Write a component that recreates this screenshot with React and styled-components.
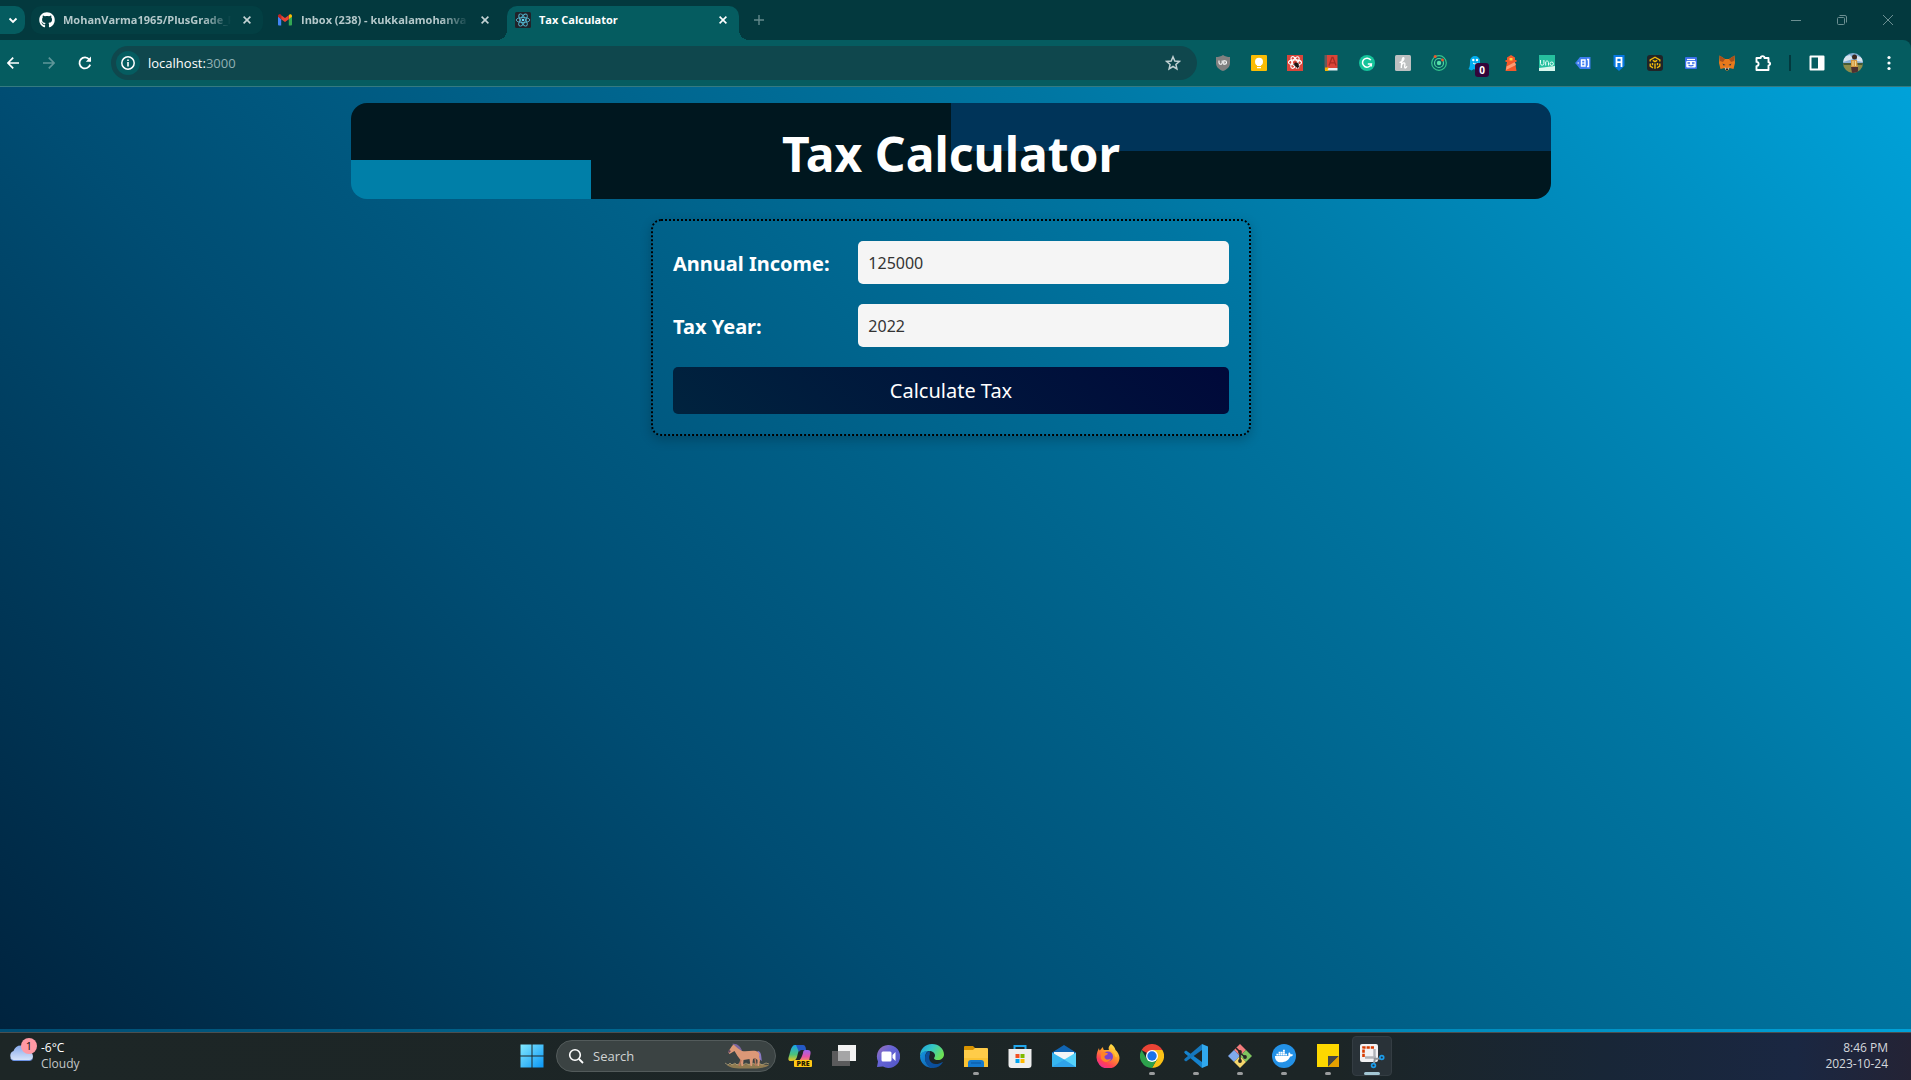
import React, { useState } from "react";
import styled, { createGlobalStyle, css } from "styled-components";
import { FaGithub, FaDocker } from "react-icons/fa";

const UI_FONT = '"Open Sans", "Noto Sans", sans-serif';
const PAGE_FONT = '"Noto Sans", "Open Sans", sans-serif';

const GlobalStyle = createGlobalStyle`
  * { box-sizing: border-box; }
  body { margin: 0; font-family: ${UI_FONT}; }
  button, input { font-family: inherit; }
  svg { display: block; flex: none; }
`;

const Screen = styled.div`
  display: flex;
  flex-direction: column;
  min-height: 100vh;
`;

/* ---------- Browser tabs ---------- */

const TabStrip = styled.div`
  display: flex;
  align-items: flex-start;
  height: 40px;
  padding-top: 6px;
  background: #03393e;
`;

const PlainButton = styled.button`
  display: flex;
  align-items: center;
  justify-content: center;
  flex: none;
  width: ${(p) => p.$w || 36}px;
  height: ${(p) => p.$h || 28}px;
  padding: 0;
  border: 0;
  background: ${(p) => p.$bg || "transparent"};
  border-radius: ${(p) => p.$radius || 0};
  color: ${(p) => p.$color || "#ffffff"};
`;

const Tab = styled.div`
  position: relative;
  display: flex;
  align-items: center;
  flex: none;
  gap: 8px;
  width: 232px;
  height: 28px;
  margin-left: 6px;
  padding: 0 8px;
  border-radius: 10px;
  background: ${(p) => (p.$tinted ? "#033f43" : "transparent")};
  color: #b4c8ca;
  font-size: 11px;
  font-weight: 700;
  line-height: 16px;

  ${(p) =>
    p.$active &&
    css`
      height: 34px;
      padding-bottom: 6px;
      border-radius: 10px 10px 0 0;
      background: #055c60;
      color: #ffffff;

      &::before,
      &::after {
        content: "";
        position: absolute;
        bottom: 0;
        width: 10px;
        height: 10px;
      }
      &::before {
        right: 100%;
        background: radial-gradient(circle at 0 0, transparent 10px, #055c60 10px);
      }
      &::after {
        left: 100%;
        background: radial-gradient(circle at 100% 0, transparent 10px, #055c60 10px);
      }
    `}
`;

const TabTitle = styled.span`
  flex: 1;
  min-width: 0;
  white-space: nowrap;
  ${(p) =>
    p.$fade &&
    css`
      mask-image: linear-gradient(to right, #000 calc(100% - 28px), transparent);
    `}
`;

const WindowControls = styled.div`
  display: flex;
  margin-left: auto;
`;

/* ---------- Browser toolbar ---------- */

const ToolbarBack = styled.div`
  background: #03393e;
`;

const Toolbar = styled.div`
  display: flex;
  align-items: center;
  height: 47px;
  padding: 0 4px 1px 0;
  border-bottom: 1px solid #347a80;
  border-top-right-radius: 8px;
  background: #055c60;
`;

const NavButtons = styled.div`
  display: flex;
  flex: none;
  width: 111px;
  padding-left: 1px;
`;

const AddressBar = styled.div`
  display: flex;
  align-items: center;
  flex: 1;
  height: 34px;
  margin-right: 8px;
  padding: 0 6px 0 5px;
  border-radius: 17px;
  background: #0f474d;
`;

const AddressText = styled.span`
  flex: 1;
  padding-left: 8px;
  color: #ffffff;
  font-size: 13px;
  line-height: 20px;
`;

const Port = styled.span`
  color: #92b0b3;
`;

const Extensions = styled.div`
  display: flex;
  align-items: center;
`;

const Slot = styled(PlainButton)`
  position: relative;
`;

const CountBadge = styled.span`
  position: absolute;
  left: 18px;
  top: 14px;
  width: 14px;
  height: 14px;
  border-radius: 3px;
  background: #33053a;
  color: #ffffff;
  font-size: 10px;
  font-weight: 700;
  line-height: 14px;
  text-align: center;
`;

const Divider = styled.div`
  width: 2px;
  height: 16px;
  margin: 0 8px;
  background: #03393e;
`;

/* ---------- Page ---------- */

const Page = styled.main`
  display: flex;
  flex: 1;
  flex-direction: column;
  align-items: center;
  padding: 16px 20px 20px 11px;
  background: linear-gradient(45deg, #00233e, #004d73 33%, #006088 50%, #0076a2 69%, #00a2d9);
  background-size: 100% calc(100% - 3px);
  font-family: ${PAGE_FONT};
`;

const Banner = styled.header`
  width: 100%;
  max-width: 1200px;
  padding: 19px 16px 13px;
  border-radius: 16px;
  background:
    linear-gradient(#007fa8, #007fa8) left bottom / 20% 41% no-repeat,
    linear-gradient(#003459, #003459) right top / 50% 50% no-repeat,
    #00171f;
`;

const Title = styled.h1`
  margin: 0;
  color: #ffffff;
  font-size: 48px;
  font-weight: 700;
  line-height: 64px;
  text-align: center;
`;

const Form = styled.form`
  display: flex;
  flex-direction: column;
  gap: 20px;
  width: 100%;
  max-width: 600px;
  margin-top: 20px;
  padding: 20px;
  border: 2px dotted #000000;
  border-radius: 10px;
  box-shadow: 0 4px 12px rgba(0, 0, 0, 0.2);
`;

const Field = styled.div`
  display: grid;
  grid-template-columns: 1fr 2fr;
  align-items: center;
`;

const Label = styled.label`
  padding-top: 2px;
  color: #ffffff;
  font-size: 20px;
  font-weight: 700;
  line-height: 28px;
`;

const Input = styled.input`
  min-width: 0;
  height: 43px;
  padding: 0 10px;
  border: 0;
  border-radius: 5px;
  background: #f5f5f5;
  color: #333333;
  font-size: 16px;
`;

const Submit = styled.button`
  height: 47px;
  border: 0;
  border-radius: 5px;
  background: linear-gradient(45deg, #00233e, #00093a);
  color: #ffffff;
  font-size: 20px;
`;

/* ---------- Taskbar ---------- */

const Taskbar = styled.footer`
  display: grid;
  grid-template-columns: 1fr auto 1fr;
  align-items: center;
  height: 48px;
  padding: 0 16px 0 9px;
  box-shadow: inset 0 1px 0 #4b4f50;
  background: linear-gradient(to right, #1d2626 0%, #1c2526 70%, #182637 84%, #1a2742 94%, #242335 100%);
  color: #ffffff;
  font-size: 12px;
  line-height: 16px;
`;

const Weather = styled.div`
  display: flex;
  gap: 8px;
`;

const WeatherIcon = styled.div`
  position: relative;
  width: 24px;
`;

const AlertBadge = styled.span`
  position: absolute;
  left: 12px;
  top: -2px;
  width: 16px;
  height: 16px;
  border-radius: 8px;
  background: #ff99a4;
  color: #101010;
  font-size: 11px;
  line-height: 16px;
  text-align: center;
`;

const Muted = styled.div`
  color: #c3c7c8;
`;

const Apps = styled.div`
  display: flex;
  align-items: center;
`;

const AppButton = styled.button`
  display: flex;
  flex-direction: column;
  align-items: center;
  justify-content: space-between;
  width: 40px;
  height: 40px;
  margin: 0 2px;
  padding: 7px 0 0;
  border: ${(p) => (p.$active ? "1px solid #343d43" : "1px solid transparent")};
  border-radius: 4px;
  background: ${(p) => (p.$active ? "#293238" : "transparent")};
`;

const Indicator = styled.span`
  width: ${(p) => (p.$state === "active" ? 16 : 6)}px;
  height: 3px;
  border-radius: 2px;
  background: ${(p) => (p.$state === "active" ? "#a3c7d4" : p.$state === "open" ? "#9a9c9d" : "transparent")};
`;

const SearchBox = styled.label`
  display: flex;
  align-items: center;
  width: 220px;
  height: 32px;
  margin: 0 2px;
  padding: 0 4px 0 11px;
  border: 1px solid #535b5b;
  border-radius: 16px;
  background: #3b4343;
`;

const SearchInput = styled.input`
  flex: 1;
  min-width: 0;
  margin-left: 8px;
  padding: 0 1px;
  border: 0;
  outline: 0;
  background: transparent;
  color: #d0d3d3;
  font-size: 13px;
  &::placeholder { color: #d0d3d3; opacity: 1; }
`;

const Clock = styled.div`
  padding-right: 7px;
  color: #d4d8dc;
  text-align: right;
`;

/* ---------- Icons ---------- */

const Svg = ({ s = 16, w, h, vb = "0 0 16 16", children, ...rest }) => (
  <svg width={w || s} height={h || s} viewBox={vb} fill="none" aria-hidden="true" {...rest}>
    {children}
  </svg>
);

const CloseIcon = () => (
  <Svg s={8} vb="0 0 8 8">
    <path d="M.6.6l6.8 6.8M7.4.6L.6 7.4" stroke="currentColor" strokeWidth="1.6" />
  </Svg>
);

const GmailIcon = () => (
  <Svg>
    <path d="M1 4.2V12.6a.9.9 0 0 0 .9.9h2.3V7z" fill="#4285f4" />
    <path d="M15 4.2V12.6a.9.9 0 0 1-.9.9h-2.3V7z" fill="#34a853" />
    <path d="M11.8 3.4V7.2L15 4.8V3.9c0-1.6-1.8-2.3-3-1.2z" fill="#fbbc04" />
    <path d="M1 3.9v.9l3.2 2.4V3.4L4 2.7C2.8 1.7 1 2.4 1 3.9z" fill="#c5221f" />
    <path d="M4.2 7.2V3.300L8 6.100l3.800-2.800v3.900L8 10z" fill="#ea4335" />
  </Svg>
);

const ReactIcon = () => (
  <Svg>
    <rect width="16" height="16" rx="1.5" fill="#20232a" />
    <g stroke="#53b4cd" strokeWidth="0.9">
      <ellipse cx="8" cy="8" rx="6.8" ry="2.6" />
      <ellipse cx="8" cy="8" rx="6.8" ry="2.6" transform="rotate(60 8 8)" />
      <ellipse cx="8" cy="8" rx="6.8" ry="2.6" transform="rotate(120 8 8)" />
    </g>
    <circle cx="8" cy="8" r="1.3" fill="#61dafb" />
  </Svg>
);

const ShieldIcon = () => (
  <Svg>
    <path d="M8 0c2.200 1.400 4.500 2 7 2v6c0 4-3 6.500-7 8-4-1.500-7-4-7-8V2c2.500 0 4.800-.6 7-2z" fill="#808080" />
    <path d="M4 5.500v2.200a1.600 1.600 0 0 0 3.200 0V5.500M8.800 5.900v3.300h1a1.700 1.700 0 0 0 0-3.400h-1z" stroke="#fff" strokeWidth="1.1" />
  </Svg>
);

const KeepIcon = () => (
  <Svg>
    <rect width="16" height="16" rx="1" fill="#fbbc04" />
    <circle cx="8" cy="6.8" r="4" fill="#fff" />
    <path d="M6 9h4v2H6zM6 12h4v1.200H6z" fill="#fff" />
  </Svg>
);

const ReactBugIcon = () => (
  <Svg>
    <rect width="16" height="16" fill="#d9453a" />
    <g stroke="#fff" strokeWidth="1.1">
      <ellipse cx="8" cy="7.5" rx="6.5" ry="2.6" />
      <ellipse cx="8" cy="7.5" rx="6.5" ry="2.6" transform="rotate(60 8 7.5)" />
      <ellipse cx="8" cy="7.5" rx="6.5" ry="2.6" transform="rotate(120 8 7.5)" />
    </g>
    <ellipse cx="9.5" cy="10" rx="1.7" ry="2.8" fill="#1b1414" transform="rotate(-40 9.5 10)" />
    <path d="M6.500 9.500l6 2.500M8.500 12.500l2.500-5M11.500 8.500l-1 5" stroke="#1b1414" strokeWidth=".9" />
  </Svg>
);

const DictionaryIcon = () => (
  <Svg>
    <path d="M1.500 0h3v15h-3z" fill="#68595a" />
    <path d="M4 0h10.500v13H4z" fill="#db4437" />
    <path d="M3.500 13h11v2.500h-11z" fill="#e9f0f5" />
    <path d="M2 12.500h4l-1.500 2L6 16H2z" fill="#f4b400" />
    <path d="M6 10.500L9 2.500h1l3 8M7.300 7.800h4.500" stroke="#a92d23" strokeWidth="1.3" />
  </Svg>
);

const GrammarlyIcon = () => (
  <Svg>
    <circle cx="8" cy="8" r="8" fill="#15c39a" />
    <path d="M11.800 5.200A4.500 4.500 0 1 0 12.300 9H8.800M12.300 9v2.600" stroke="#fff" strokeWidth="1.5" />
  </Svg>
);

const HoneyIcon = () => (
  <Svg>
    <rect width="16" height="16" rx="1.5" fill="#bdc0c1" />
    <path d="M4.500 7.500C8 6.500 9.500 4 8.800 2.800 7.800 1.500 6.500 5 6.300 13M6.400 10.500c1-3 3.600-3.500 3.500-1.500-.1 1.500-.6 4 .3 4 .8 0 1.300-.8 1.800-1.800" stroke="#fff" strokeWidth="1.3" />
  </Svg>
);

const OrbitIcon = () => (
  <Svg>
    <circle cx="8" cy="8" r="7.3" stroke="#35c48c" strokeWidth="1.2" />
    <circle cx="8" cy="8" r="4.5" stroke="#4fd6a0" strokeWidth="1.2" />
    <circle cx="8" cy="8" r="2.2" fill="#54e0a8" />
    <circle cx="4.2" cy="1.6" r="1.5" fill="#f0592a" />
    <circle cx="11.5" cy="5" r="1.4" fill="#f0592a" />
  </Svg>
);

const GhostIcon = () => (
  <Svg>
    <path d="M3 6a5 5 0 0 1 10 0c0 4 0 6 .5 9l-2.500-1-2 1.500L7 14l-2.500 1.500L1.500 14C3 12 3 9 3 6z" fill="#00aef0" />
    <circle cx="6.3" cy="5" r="1.2" fill="#fff" />
    <circle cx="10" cy="5" r="1.2" fill="#fff" />
    <path d="M6 8c1.500 1.200 3 1.200 4.500 0" stroke="#fff" />
  </Svg>
);

const LighthouseIcon = () => (
  <Svg>
    <path d="M8 0l4 2.500V5h1.500v2H12l1.500 9h-11L4 7H2.500V5H4V2.500z" fill="#f4592b" />
    <path d="M3.500 11.500L11 7.500h1L13 10l-10 5z" fill="#ff9b72" />
    <rect x="6.5" y="3" width="3" height="2.5" fill="#ffd43d" />
  </Svg>
);

const UnoIcon = () => (
  <Svg>
    <rect width="16" height="16" fill="#26bf9e" />
    <path d="M0 13l16-2v5H0z" fill="#d7f6ed" />
    <path d="M1.500 5v3.500a1.700 1.700 0 0 0 3.400 0V5M6.700 10.500V6.800c1-1.400 2.800-.8 2.800.7v3" stroke="#e8fffa" />
    <circle cx="12.7" cy="8.7" r="1.7" stroke="#e8fffa" />
  </Svg>
);

const TagIcon = () => (
  <Svg>
    <path d="M5 2h10.500v12H5L1 9 0 8l1-1z" fill="#3f7df0" />
    <path d="M6.500 5h3.500v6H6.500zM12 4.500h1.500v7H12" stroke="#fff" strokeWidth="1.4" />
    <path d="M6.500 8h3.500M2.500 8h1.500" stroke="#fff" />
  </Svg>
);

const PennantIcon = () => (
  <Svg>
    <path d="M2.500 0h11v11L8 16l-5.500-5z" fill="#0878e3" />
    <path d="M5.500 12V2.800h5V12M5.500 7.200h5" stroke="#fff" strokeWidth="1.8" />
  </Svg>
);

const CubeIcon = () => (
  <Svg>
    <rect width="16" height="16" rx="3" fill="#202427" />
    <path d="M3.200 6.500V5L8 2.200 12.800 5v1.500M5.800 5.300L8 6.600l2.200-1.300M3.200 8.500v2.700L6 12.800M12.800 8.500v2.700L10 12.800M8 8.500v5.200M5.500 8v2.300M10.500 8v2.300" stroke="#efb90b" strokeWidth="1.4" />
  </Svg>
);

const RobotIcon = () => (
  <Svg>
    <rect x="2" y="2" width="12" height="12" rx="1" fill="#3b6fe8" />
    <path d="M4 4.500h8" stroke="#fff" strokeWidth="1.2" />
    <rect x="3.2" y="6" width="9.6" height="6.5" rx="1" fill="#fff" />
    <path d="M4.500 8h2.500M9 8h2.500M5.500 10c1.500 1 3.500 1 5 0" stroke="#3b6fe8" strokeWidth="1.3" />
  </Svg>
);

const FoxIcon = () => (
  <Svg>
    <path d="M.5.5L6 4h4L15.500.5 16 8l-1.500 6-4-1-1.500 2.500H7L5.500 13l-4 1L0 8z" fill="#e8791b" />
    <path d="M.5.5L6 4 4 7 1 6zM15.500.5L10 4l2 3 3-1z" fill="#a8501a" />
    <path d="M5.500 12l1.200 3h2.600l1.200-3L9 13H7z" fill="#d5bfb2" />
    <path d="M3.500 8.500l3 1.500-2 .5zM12.500 8.500l-3 1.500 2 .5z" fill="#233447" />
    <path d="M7 13.500h2v1.500H7z" fill="#1b1b20" />
  </Svg>
);

const PuzzleIcon = () => (
  <Svg s={18} vb="0 0 18 18">
    <path d="M2.500 4h4.200a1.900 1.900 0 0 1 3.800 0h4v4.200a1.200 1.200 0 0 1 0 3.200V16h-12v-3.900a2.100 2.100 0 0 0 0-4.200z" stroke="#fff" strokeWidth="1.900" strokeLinejoin="round" />
  </Svg>
);

const AvatarIcon = () => (
  <Svg s={20} vb="0 0 20 20">
    <defs>
      <clipPath id="face"><circle cx="10" cy="10" r="10" /></clipPath>
    </defs>
    <g clipPath="url(#face)">
      <path d="M0 0h20v12H0z" fill="#86aed5" />
      <path d="M0 4l7-2 3 4-10 3zM14 3l6 2v4l-6-1z" fill="#d9e4ed" />
      <path d="M0 11h20v9H0z" fill="#8c8c4b" />
      <path d="M0 10h20v2H0z" fill="#455b36" />
      <circle cx="11.5" cy="4" r="2.5" fill="#3b271f" />
      <path d="M8 7h6l1 9H8z" fill="#d79a43" />
      <path d="M8 14h7v6H9z" fill="#4e3132" />
      <path d="M10 8v5M12.500 8v5" stroke="#f0d893" />
    </g>
  </Svg>
);

const WindowsIcon = () => (
  <Svg s={24} vb="0 0 24 24">
    <defs>
      <linearGradient id="win" x1="0" y1="0" x2="1" y2="1">
        <stop stopColor="#83e9ff" />
        <stop offset="1" stopColor="#0a96f5" />
      </linearGradient>
    </defs>
    <path d="M.5.5h11v11H.5zM12.500.5h11v11h-11zM.5 12.500h11v11H.5zM12.500 12.500h11v11h-11z" fill="url(#win)" />
  </Svg>
);

const HorseIcon = () => (
  <Svg w={47} h={26} vb="0 0 47 26">
    <path d="M3 22c8-2 13 0 20-1s14 0 22 1c-3 3-10 3.500-22 3.500S6 25 3 22z" fill="#8f7a50" />
    <path d="M1 20l3 2 2-2 2 2 3-2 2 2 3-2 3 2 3-2 3 2 4-2 3 2 3-2 3 2 4-2 3 1" stroke="#b9a67c" strokeWidth=".7" />
    <path d="M34 8c4 1 3 7 4 10l-3-2c0-3 0-5-2-7z" fill="#8b7ac4" />
    <path d="M4 9l4-6 2-2 4 2 4 5c5 1 9-1 14 0 3 1 4 3 3 6l1 3-1 6h-1.500v-6L31 15l-2 1-1 7h-1.500l-1-7-6 1-.5 6h-1.500l-1-6-3-4-3-5-5 3z" fill="#dc9877" />
    <path d="M17 17l-2 6M31 15l1 8" stroke="#b8765b" strokeWidth="1.5" />
    <path d="M8 1c5-1 9 3 10 7-2-1-5-3-8-6z" fill="#7b669f" />
    <path d="M4 9l1-2 2 1-2 2z" fill="#594461" />
  </Svg>
);

const CopilotIcon = () => (
  <Svg s={24} vb="0 0 24 24">
    <defs>
      <linearGradient id="cpA" x1="0" y1="0" x2="0" y2="1">
        <stop stopColor="#18a6ec" />
        <stop offset=".6" stopColor="#4cc27a" />
        <stop offset="1" stopColor="#f2c51d" />
      </linearGradient>
      <linearGradient id="cpB" x1="0" y1="0" x2="0" y2="1">
        <stop stopColor="#9a64ee" />
        <stop offset=".6" stopColor="#e552a6" />
        <stop offset="1" stopColor="#f79258" />
      </linearGradient>
    </defs>
    <path d="M7 1h7c-3 3-4 8-5 12-1 3-3 4-5 4H3c-3 0-3-2-2-5l2-7c1-2 2-4 4-4z" fill="url(#cpA)" />
    <path d="M8 1h7c2 0 3 2 3 5h-3c-2 0-3 0-4 2z" fill="#2459c6" />
    <path d="M17 6h3c3 0 3 3 2 6l-1 5H10c3-1 4-5 5-8 0-2 1-3 2-3z" fill="url(#cpB)" />
    <rect x="6" y="16" width="18" height="7" rx="1" fill="#ffc815" />
    <text x="15" y="22" textAnchor="middle" fontFamily="Open Sans, sans-serif" fontWeight="800" fontSize="7" fill="#251a00">PRE</text>
  </Svg>
);

const TaskViewIcon = () => (
  <Svg s={24} vb="0 0 24 24">
    <path d="M0 7h18v15H0z" fill="#5b5b5c" />
    <path d="M6 1h18v16H6z" fill="#f2f2f2" />
    <path d="M6 7h12v10H6z" fill="#a5a5a6" />
  </Svg>
);

const ChatIcon = () => (
  <Svg s={24} vb="0 0 24 24">
    <defs>
      <linearGradient id="chat" x1="0" y1="0" x2="1" y2="1">
        <stop stopColor="#a072b5" />
        <stop offset=".4" stopColor="#6664d6" />
        <stop offset="1" stopColor="#5055c5" />
      </linearGradient>
    </defs>
    <path d="M12 1a11.500 11.500 0 1 1-5 21.500L1 23l1-5.500A11.500 11.500 0 0 1 12 1z" fill="url(#chat)" />
    <rect x="5.5" y="7.5" width="10" height="10" rx="1.5" fill="#fff" />
    <path d="M16.500 11l3-3v9l-3-3z" fill="#fff" />
  </Svg>
);

const EdgeIcon = () => (
  <Svg s={24} vb="0 0 24 24">
    <defs>
      <linearGradient id="edgeTop" x1="0" y1="0" x2="1" y2=".5">
        <stop stopColor="#1b9de2" />
        <stop offset=".5" stopColor="#35c8c4" />
        <stop offset="1" stopColor="#6ce155" />
      </linearGradient>
      <linearGradient id="edgeLow" x1="0" y1="0" x2="1" y2="1">
        <stop stopColor="#1397e2" />
        <stop offset="1" stopColor="#1159a7" />
      </linearGradient>
    </defs>
    <path d="M0 12C0 5 5 0 12 0s12 5 12 10.500c0 3.500-3 5.500-6 5.500-2.500 0-4-1-4-1.800 0-.7 1-.9 1-2.700 0-2.500-2.500-4.500-6-4.500C4 7 1 9.500 0 12z" fill="url(#edgeTop)" />
    <path d="M0 12c1-3.500 4.500-5.500 8.500-5C6 8 5 11 5 14c0 5 4 9 8.500 9.800A12 12 0 0 1 0 12z" fill="url(#edgeLow)" />
    <path d="M9.800 10.500C8 13.500 9.500 20 16 20c2.500 0 4-.6 6-1.800.5-.3.9 0 .6.5A12 12 0 0 1 13.500 24C8.500 23.500 5 19 5 14.500 5 10.500 7 7.500 9.800 7z" fill="#0b4f9c" />
  </Svg>
);

const FolderIcon = () => (
  <Svg s={24} vb="0 0 24 24">
    <path d="M0 3a1 1 0 0 1 1-1h8l2 2v4H0z" fill="#d89300" />
    <path d="M0 6h9l2-2h12a1 1 0 0 1 1 1v18H0z" fill="#ffcc49" />
    <path d="M0 14h24v9H0z" fill="#fac233" />
    <path d="M4 19a3 3 0 0 1 3-3h10a3 3 0 0 1 3 3v4H4z" fill="#1479ce" />
    <path d="M7 19h10" stroke="#0d5ba6" strokeWidth="1.2" />
  </Svg>
);

const StoreIcon = () => (
  <Svg s={24} vb="0 0 24 24">
    <path d="M6.500 7V2h11v5" stroke="#21a6ea" strokeWidth="2" />
    <path d="M.5 5h23v16a3 3 0 0 1-3 3h-17a3 3 0 0 1-3-3z" fill="#eeeeee" />
    <path d="M7.500 10h4v4h-4z" fill="#f25022" />
    <path d="M12.500 10h4v4h-4z" fill="#7fba00" />
    <path d="M7.500 15h4v4h-4z" fill="#00a4ef" />
    <path d="M12.500 15h4v4h-4z" fill="#ffb900" />
  </Svg>
);

const MailIcon = () => (
  <Svg s={24} vb="0 0 24 24">
    <path d="M0 8.500L12 1l12 7.500V13H0z" fill="#1065b4" />
    <path d="M2 8h20v8H2z" fill="#f3f5f7" />
    <path d="M0 8.500l13 7.500L0 23z" fill="#36b5ef" />
    <path d="M24 8.500V23H0z" fill="#55d1fa" />
    <path d="M0 23l12-7.500L24 23z" fill="#2fa3ea" />
  </Svg>
);

const FirefoxIcon = () => (
  <Svg s={24} vb="0 0 24 24">
    <defs>
      <linearGradient id="fox" x1=".8" y1="0" x2=".2" y2="1">
        <stop stopColor="#fff04c" />
        <stop offset=".4" stopColor="#ff9a28" />
        <stop offset=".75" stopColor="#ff4055" />
        <stop offset="1" stopColor="#e62ba2" />
      </linearGradient>
    </defs>
    <path d="M15 0c3 2 4 4 4.500 6 2 1.500 4 5 4 8A11.500 11 0 0 1 .5 13C.5 9 2 6 3 4c0 1.200.3 2 .8 2.500C5 5 6 4 7 3c0 1.500.5 2.500 1 3h5c-1-2 0-4 2-6z" fill="url(#fox)" />
    <circle cx="12" cy="12.5" r="5" fill="#7a42cf" />
    <path d="M5 9c3-1.500 5 0 7 .5-1 2-3.500 1.500-3.500 3.500 0 2.500 4 3.500 6.500 1.500-1 4-8 5-10 0z" fill="#ff8326" />
    <path d="M13 6c3 0 6 3 6 6.500l2 .5c0-4-2-6-4-7.500z" fill="#ffc335" />
  </Svg>
);

const ChromeIcon = () => (
  <Svg s={24} vb="0 0 24 24">
    <path d="M12 12L1.600 6A12 12 0 0 1 22.400 6z" fill="#ea4335" />
    <path d="M12 12V6h10.400A12 12 0 0 1 12 24l5.200-9z" fill="#fbc116" />
    <path d="M12 12l5.200 3L12 24A12 12 0 0 1 1.600 6l5.200 9z" fill="#2da14c" />
    <circle cx="12" cy="12" r="6" fill="#fff" />
    <circle cx="12" cy="12" r="4.7" fill="#1a73e8" />
  </Svg>
);

const CodeIcon = () => (
  <Svg s={24} vb="0 0 24 24">
    <path d="M0 8l2-1.500L18 18v6L1 9.500z" fill="#1583ce" />
    <path d="M0 16l2 1.500L18 6V0L1 14.500z" fill="#1577bd" />
    <path d="M18 0l6 2.500v19L18 24z" fill="#30a8ee" />
  </Svg>
);

const GitIcon = () => (
  <Svg s={24} vb="0 0 24 24">
    <path d="M12 0l6 6-6 6-6-6z" fill="#f47c7c" />
    <path d="M18 6l6 6-6 6-6-6z" fill="#7fc35f" />
    <path d="M6 6l6 6-6 6-6-6z" fill="#7fa9ee" />
    <path d="M12 12l6 6-6 6-6-6z" fill="#f5d66b" />
    <path d="M8 4l4 4v9M12 9l5 4" stroke="#252525" strokeWidth="1.6" />
    <circle cx="12" cy="8" r="1.9" fill="#252525" />
    <circle cx="12" cy="17" r="1.9" fill="#252525" />
    <circle cx="17" cy="13" r="1.9" fill="#252525" />
  </Svg>
);

const DockerCircle = styled.span`
  display: flex;
  align-items: center;
  justify-content: center;
  width: 24px;
  height: 24px;
  border-radius: 12px;
  background: #2391e6;
  color: #ffffff;
`;

const DockerIcon = () => (
  <DockerCircle>
    <FaDocker size={18} />
  </DockerCircle>
);

const StickyIcon = () => (
  <Svg s={24} vb="0 0 24 24">
    <path d="M1 0h22v23H1z" fill="#fdd800" />
    <path d="M12 23V12h11z" fill="#454545" />
    <path d="M12 23h11V12z" fill="#e6a000" />
  </Svg>
);

const SnipIcon = () => (
  <Svg s={24} vb="0 0 24 24" overflow="visible">
    <rect width="18" height="18" rx="2" fill="#f2f2f4" />
    <path d="M3.500 13V3.500H14" stroke="#d83b01" strokeWidth="2.6" strokeDasharray="3.2 1" />
    <path d="M5 13.500h11M14.500 5v10" stroke="#b0b3b8" strokeWidth="2.4" />
    <path d="M14 19.500l1-5.500M14 15l6-.5" stroke="#8d9297" strokeWidth="2" />
    <circle cx="13.5" cy="21.5" r="1.900" stroke="#1b9be8" strokeWidth="1.7" />
    <circle cx="21.8" cy="13.5" r="1.900" stroke="#1b9be8" strokeWidth="1.7" />
  </Svg>
);

const CloudIcon = () => (
  <Svg s={24} vb="0 0 24 24">
    <defs>
      <linearGradient id="cloud" x1="0" y1="0" x2="0" y2="1">
        <stop stopColor="#86a9ea" />
        <stop offset="1" stopColor="#d9e5fb" />
      </linearGradient>
    </defs>
    <path d="M5 20.500a5 5 0 0 1-.5-9.500A8 8 0 0 1 20 12a4.300 4.300 0 0 1 .5 8.500z" fill="url(#cloud)" />
    <path d="M1.500 18.500c1 1.500 2.500 2 3.500 2h15c2 0 3-.8 4-2" stroke="#6c92e4" />
  </Svg>
);

const extensions = [
  ["uBlock", ShieldIcon],
  ["Keep", KeepIcon],
  ["React tools", ReactBugIcon],
  ["Dictionary", DictionaryIcon],
  ["Grammarly", GrammarlyIcon],
  ["Honey", HoneyIcon],
  ["Orbit", OrbitIcon],
  ["Ghostery", GhostIcon, "0"],
  ["Lighthouse", LighthouseIcon],
  ["Uno", UnoIcon],
  ["Tag", TagIcon],
  ["Pennant", PennantIcon],
  ["Wallet", CubeIcon],
  ["Robot", RobotIcon],
  ["MetaMask", FoxIcon],
  ["Extensions", PuzzleIcon],
];

const apps = [
  ["Copilot", CopilotIcon],
  ["Task view", TaskViewIcon],
  ["Chat", ChatIcon],
  ["Edge", EdgeIcon],
  ["File Explorer", FolderIcon, "open"],
  ["Store", StoreIcon],
  ["Mail", MailIcon],
  ["Firefox", FirefoxIcon],
  ["Chrome", ChromeIcon, "open"],
  ["Code", CodeIcon, "open"],
  ["Git", GitIcon, "open"],
  ["Docker", DockerIcon, "open"],
  ["Sticky Notes", StickyIcon, "open"],
  ["Snipping Tool", SnipIcon, "active"],
];

function BrowserTab({ icon, title, fade, active, tinted }) {
  return (
    <Tab $active={active} $tinted={tinted}>
      {icon}
      <TabTitle $fade={fade}>{title}</TabTitle>
      <PlainButton $w={16} $h={16} $color={active ? "#ffffff" : "#c4d3d4"} aria-label="Close tab">
        <CloseIcon />
      </PlainButton>
    </Tab>
  );
}

export default function App() {
  const [income, setIncome] = useState("125000");
  const [year, setYear] = useState("2022");

  return (
    <Screen>
      <GlobalStyle />
      <TabStrip>
        <PlainButton $w={25} $bg="#055c60" $radius="0 10px 10px 0" aria-label="Search tabs">
          <Svg s={10} vb="0 0 10 10">
            <path d="M1.500 3.500L5 7l3.500-3.500" stroke="#fff" strokeWidth="1.8" />
          </Svg>
        </PlainButton>
        <BrowserTab tinted fade icon={<FaGithub size={16} color="#ffffff" />} title="MohanVarma1965/PlusGrade_F" />
        <BrowserTab fade icon={<GmailIcon />} title="Inbox (238) - kukkalamohanva" />
        <BrowserTab active icon={<ReactIcon />} title="Tax Calculator" />
        <PlainButton $w={40} $color="#64898c" aria-label="New tab">
          <Svg s={10} vb="0 0 10 10">
            <path d="M5 0v10M0 5h10" stroke="currentColor" strokeWidth="1.4" />
          </Svg>
        </PlainButton>
        <WindowControls>
          <PlainButton $w={46} $color="#6c8f92" aria-label="Minimize">
            <Svg s={10} vb="0 0 10 10"><path d="M0 5.500h10" stroke="currentColor" /></Svg>
          </PlainButton>
          <PlainButton $w={46} $color="#6c8f92" aria-label="Restore">
            <Svg s={10} vb="0 0 10 10">
              <rect x=".5" y="2.5" width="7" height="7" rx="1" stroke="currentColor" />
              <path d="M2.500.5H8a1.500 1.500 0 0 1 1.500 1.500v5.500" stroke="currentColor" />
            </Svg>
          </PlainButton>
          <PlainButton $w={46} $color="#6c8f92" aria-label="Close">
            <Svg s={10} vb="0 0 10 10"><path d="M0 0l10 10M10 0L0 10" stroke="currentColor" /></Svg>
          </PlainButton>
        </WindowControls>
      </TabStrip>

      <ToolbarBack>
        <Toolbar>
          <NavButtons>
            <PlainButton $w={24} aria-label="Back">
              <Svg s={12} vb="0 0 12 12"><path d="M12 6H1M6.200.6L.9 6l5.300 5.400" stroke="#fff" strokeWidth="1.7" /></Svg>
            </PlainButton>
            <PlainButton $w={48} $color="#5f9699" aria-label="Forward">
              <Svg s={12} vb="0 0 12 12"><path d="M0 6h11M5.800.6L11.100 6l-5.300 5.400" stroke="currentColor" strokeWidth="1.7" /></Svg>
            </PlainButton>
            <PlainButton $w={24} aria-label="Reload">
              <Svg s={14} vb="0 0 14 14">
                <path d="M12.200 8.600A5.500 5.500 0 1 1 11.300 3.500L12.500 5" stroke="#fff" strokeWidth="1.8" />
                <path d="M13 .5v5.300H7.800z" fill="#fff" />
              </Svg>
            </PlainButton>
          </NavButtons>
          <AddressBar>
            <PlainButton $w={24} $h={24} $bg="#055c60" $radius="12px" aria-label="Site information">
              <Svg s={14} vb="0 0 14 14">
                <circle cx="7" cy="7" r="6.2" stroke="#fff" strokeWidth="1.5" />
                <path d="M7 6v4.500M7 3.400v1.500" stroke="#fff" strokeWidth="1.6" />
              </Svg>
            </PlainButton>
            <AddressText>localhost:<Port>3000</Port></AddressText>
            <PlainButton aria-label="Bookmark">
              <Svg s={16}>
                <path d="M8 1.800l1.800 4.200 4.500.4-3.400 3 1 4.500L8 11.500l-3.900 2.400 1-4.500-3.400-3 4.500-.4z" stroke="#c0d0d2" strokeWidth="1.5" />
              </Svg>
            </PlainButton>
          </AddressBar>
          <Extensions>
            {extensions.map(([name, Icon, count]) => (
              <Slot key={name} aria-label={name}>
                <Icon />
                {count && <CountBadge>{count}</CountBadge>}
              </Slot>
            ))}
            <Divider />
            <Slot aria-label="Side panel">
              <Svg>
                <path d="M1.500 1.500h13v13h-13z" stroke="#fff" strokeWidth="2" strokeLinejoin="round" />
                <path d="M9 1h6v14H9z" fill="#fff" />
              </Svg>
            </Slot>
            <Slot aria-label="Profile"><AvatarIcon /></Slot>
            <Slot aria-label="Menu">
              <Svg>
                <circle cx="8" cy="2.5" r="1.6" fill="#fff" />
                <circle cx="8" cy="8" r="1.6" fill="#fff" />
                <circle cx="8" cy="13.5" r="1.6" fill="#fff" />
              </Svg>
            </Slot>
          </Extensions>
        </Toolbar>
      </ToolbarBack>

      <Page>
        <Banner>
          <Title>Tax Calculator</Title>
        </Banner>
        <Form onSubmit={(e) => e.preventDefault()}>
          <Field>
            <Label htmlFor="income">Annual Income:</Label>
            <Input id="income" value={income} onChange={(e) => setIncome(e.target.value)} />
          </Field>
          <Field>
            <Label htmlFor="year">Tax Year:</Label>
            <Input id="year" value={year} onChange={(e) => setYear(e.target.value)} />
          </Field>
          <Submit type="submit">Calculate Tax</Submit>
        </Form>
      </Page>

      <Taskbar>
        <Weather>
          <WeatherIcon>
            <CloudIcon />
            <AlertBadge>1</AlertBadge>
          </WeatherIcon>
          <div>
            <div>-6°C</div>
            <Muted>Cloudy</Muted>
          </div>
        </Weather>
        <Apps>
          <AppButton aria-label="Start">
            <WindowsIcon />
            <Indicator />
          </AppButton>
          <SearchBox>
            <Svg s={16}>
              <circle cx="7" cy="7" r="5.3" stroke="#fff" strokeWidth="1.6" />
              <path d="M11 11l4 4" stroke="#fff" strokeWidth="1.8" />
            </Svg>
            <SearchInput type="text" placeholder="Search" aria-label="Search" />
            <HorseIcon />
          </SearchBox>
          {apps.map(([name, Icon, state]) => (
            <AppButton key={name} $active={state === "active"} aria-label={name}>
              <Icon />
              <Indicator $state={state} />
            </AppButton>
          ))}
        </Apps>
        <Clock>
          <div>8:46 PM</div>
          <div>2023-10-24</div>
        </Clock>
      </Taskbar>
    </Screen>
  );
}
